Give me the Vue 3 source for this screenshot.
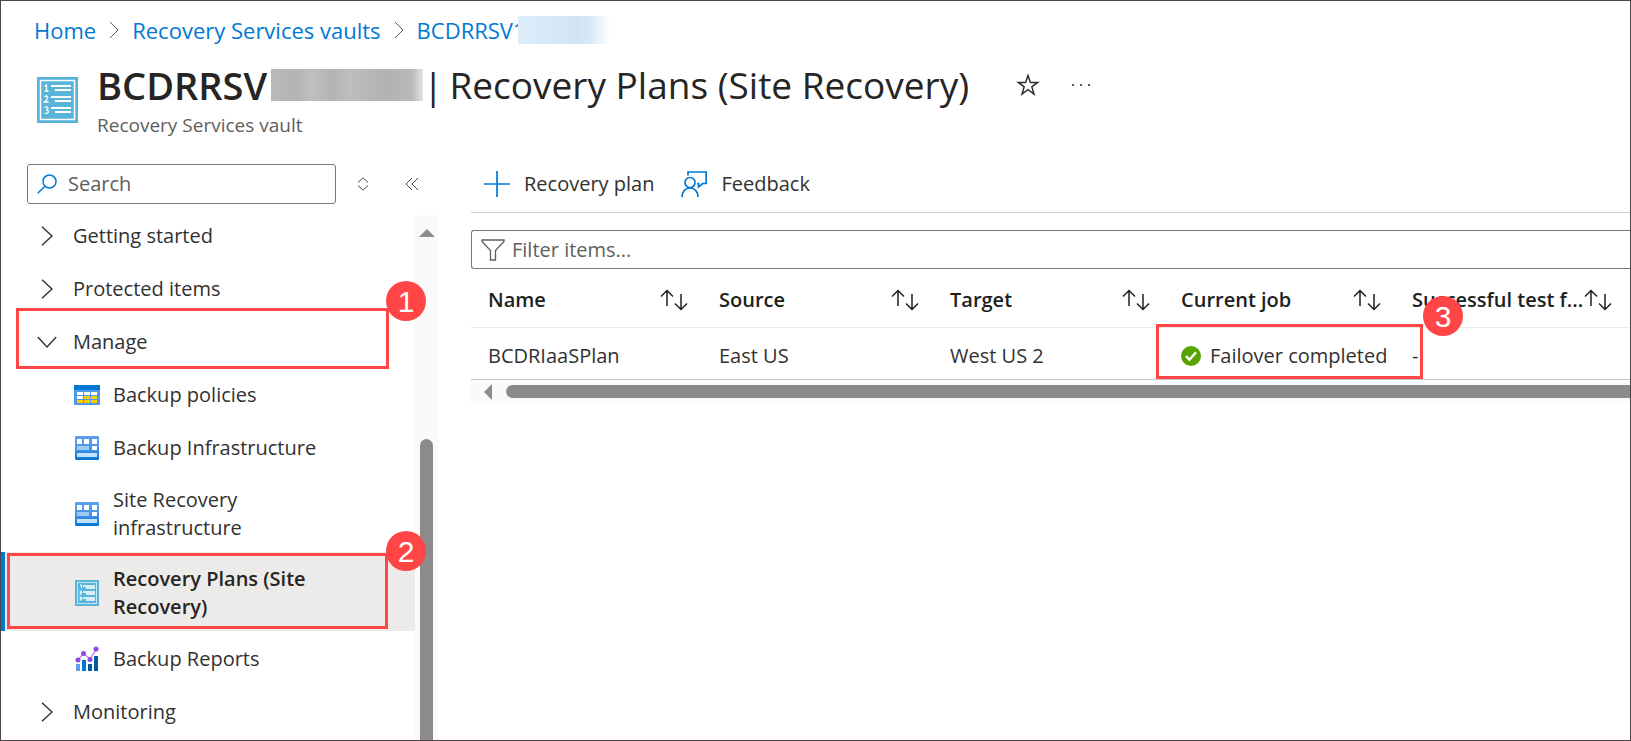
<script setup>
const groupsBefore = ['Getting started', 'Protected items']
const items = [
  { label: 'Backup policies', icon: 'policies' },
  { label: 'Backup Infrastructure', icon: 'infra' },
  { label: 'Site Recovery infrastructure', icon: 'infra' },
  { label: 'Recovery Plans (Site Recovery)', icon: 'plans', selected: true },
  { label: 'Backup Reports', icon: 'reports' }
]
const columns = ['Name', 'Source', 'Target', 'Current job', 'Successful test f...']
</script>

<template>
  <div class="page">
    <nav class="breadcrumb" aria-label="Breadcrumb">
      <a href="#">Home</a>
      <svg class="sep" viewBox="0 0 12 18"><path d="M2 1l8 8-8 8" /></svg>
      <a href="#">Recovery Services vaults</a>
      <svg class="sep" viewBox="0 0 12 18"><path d="M2 1l8 8-8 8" /></svg>
      <a href="#" class="masked">BCDRRSV1<span class="mask-blue"></span></a>
    </nav>

    <header class="header">
      <svg class="vault-icon" viewBox="0 0 41 46">
        <rect width="41" height="46" fill="#59b4d9" />
        <rect x="3.5" y="3.500" width="34" height="39" fill="none" stroke="#fff" stroke-width="1.500" />
        <path d="M14 9h20M18 13h16M14 20h20M18 24h16M14 31h20M18 35h16" stroke="#fff" stroke-width="1.800" />
        <path d="M7.500 9.500l2-1.500v6M7.500 14h4M7.500 20q2-2 3.200 0q.5 1.500-3.200 5h4M7.500 30.500q3.500-1.500 3.500 1q0 1.300-2 1.500q2.300.2 2.300 1.800q-.3 2.400-3.800 1.200" fill="none" stroke="#fff" stroke-width="1.300" />
      </svg>
      <div>
        <div class="title-row">
          <h1><b>BCDRRSV</b><span class="mask-gray"></span><span class="bar">|</span><span>Recovery Plans (Site Recovery)</span></h1>
          <button class="plain star" aria-label="Add to favorites">
            <svg viewBox="0 0 24 24"><path d="M12 2.500l2.400 6.900h7.300l-5.900 4.400 2.200 7.200-6-4.400-6 4.400 2.200-7.200-5.900-4.400h7.300z" /></svg>
          </button>
          <button class="plain dots" aria-label="More">
            <svg viewBox="0 0 20 4"><circle cx="2" cy="2" r="1.100" /><circle cx="10" cy="2" r="1.100" /><circle cx="18" cy="2" r="1.100" /></svg>
          </button>
        </div>
        <p class="subtitle">Recovery Services vault</p>
      </div>
    </header>

    <div class="body">
      <aside class="sidebar">
        <div class="side-tools">
          <label class="box search">
            <svg viewBox="0 0 20 20"><circle cx="12.500" cy="7.500" r="6.500" /><path d="M8 12.200L.7 19.300" /></svg>
            <input type="text" placeholder="Search" aria-label="Search" />
          </label>
          <button class="plain" aria-label="Expand or collapse groups">
            <svg class="updown" viewBox="0 0 12 14"><path d="M1 5.500L6 .8l5 4.700M1 8.500l5 4.700 5-4.700" /></svg>
          </button>
          <button class="plain" aria-label="Hide menu">
            <svg class="hide" viewBox="0 0 14 14"><path d="M7 1L1 7l6 6M13 1L7 7l6 6" /></svg>
          </button>
        </div>

        <div class="side-body">
          <nav class="menu" aria-label="Vault menu">
            <button v-for="g in groupsBefore" :key="g" class="row group">
              <span class="chev"><svg class="right" viewBox="0 0 12 20"><path d="M1 .8l10 9.200-10 9.200" /></svg></span>{{ g }}
            </button>
            <div class="marked">
              <button class="row group" aria-expanded="true">
                <span class="chev"><svg class="down" viewBox="0 0 20 12"><path d="M.8 1l9.200 10 9.200-10" /></svg></span>Manage
              </button>
              <span class="frame frame-1"></span>
              <span class="badge badge-1">1</span>
            </div>
            <div v-for="i in items" :key="i.label" class="marked">
              <a href="#" class="row item" :class="{ selected: i.selected }">
                <svg v-if="i.icon === 'policies'" class="icon" viewBox="0 0 26 26">
                  <rect y="3" width="26" height="20" rx="1" fill="#4f9ae8" />
                  <rect y="3" width="26" height="5" fill="#0078d4" />
                  <path d="M3 10h6v3H3zM10 10h6v3h-6zM17 10h6v3h-6zM3 14h6v3H3z" fill="#fff" />
                  <path d="M10 14h6v3h-6zM17 14h6v3h-6zM3 18h6v3H3zM10 18h6v3h-6zM17 18h6v3h-6z" fill="#ffca00" />
                </svg>
                <svg v-else-if="i.icon === 'infra'" class="icon" viewBox="0 0 26 26">
                  <defs><linearGradient :id="'g' + i.label.length" x2="0" y2="1"><stop offset="0" stop-color="#5ea0ef" /><stop offset=".5" stop-color="#4a96e8" /><stop offset="1" stop-color="#0078d4" /></linearGradient></defs>
                  <rect x="1" y="1" width="24" height="24" rx="1" :fill="'url(#g' + i.label.length + ')'" />
                  <path d="M3 4h5v5H3zM10 4h5v5h-5zM18 4h5v5h-5zM18 11h5v4h-5z" fill="#fff" />
                  <path d="M3 11h12v4H3z" fill="#9ccbfa" />
                  <path d="M3 18h20v4H3z" fill="#c3e1fa" />
                </svg>
                <svg v-else-if="i.icon === 'plans'" class="icon" viewBox="0 0 26 26">
                  <rect x="1" width="24" height="26" fill="#59b4d9" />
                  <rect x="3.500" y="2.500" width="19" height="21" fill="none" stroke="#c4e7f4" />
                  <path d="M9 6h12M12 8h9M9 12h12M12 14h9M9 18h12M12 20h9" stroke="#fff" stroke-width="1.300" />
                  <path d="M6 5h1.500v3M5.500 11h2v1.500H6V14h2M5.500 17h2v3h-2M6 18.500h1.500" fill="none" stroke="#fff" />
                </svg>
                <svg v-else class="icon" viewBox="0 0 26 26">
                  <path d="M2 18h4v7H2z" fill="#5ea0ef" /><path d="M8 14h4v11H8z" fill="#0078d4" />
                  <path d="M14 18h4v7h-4zM20 10h4v15h-4z" fill="#005ba1" />
                  <path d="M4 14L9.500 7.500l6.500 5.500L22.500 3" fill="none" stroke="#c69aeb" stroke-width="1.600" />
                  <g fill="#8a4be0"><circle cx="4" cy="14" r="2.500" /><circle cx="9.500" cy="7.500" r="2.500" /><circle cx="16" cy="13.500" r="2.500" /><circle cx="22" cy="3" r="2.500" /></g>
                </svg>
                <span class="label">{{ i.label }}</span>
              </a>
              <template v-if="i.selected">
                <span class="frame frame-2"></span>
                <span class="badge badge-2">2</span>
              </template>
            </div>
            <button class="row group">
              <span class="chev"><svg class="right" viewBox="0 0 12 20"><path d="M1 .8l10 9.200-10 9.200" /></svg></span>Monitoring
            </button>
          </nav>
          <div class="vscroll">
            <svg viewBox="0 0 16 8"><path d="M0 8l8-8 8 8z" fill="#8b8b8b" /></svg>
            <span class="vthumb"></span>
          </div>
        </div>
      </aside>

      <main class="main">
        <div class="commands">
          <button class="command">
            <svg class="plus" viewBox="0 0 26 26"><path d="M13 0v26M0 13h26" /></svg>Recovery plan
          </button>
          <button class="command">
            <svg class="feedback" viewBox="0 0 26 26">
              <path d="M7 4.500V1h18.200v11.500h-3.500L17.500 16v-3.500H16" />
              <circle cx="9" cy="11.500" r="5" /><path d="M1 26c0-5.500 3.500-9 8-9s8 3.500 8 9" />
            </svg>Feedback
          </button>
        </div>
        <label class="box filter">
          <svg viewBox="0 0 24 22"><path d="M1 1h22v1.500l-8.500 9V21h-5v-9.500L1 2.500z" /></svg>
          <input type="text" placeholder="Filter items..." aria-label="Filter items" />
        </label>
        <table class="grid">
          <colgroup><col v-for="n in 4" :key="n" class="col" /><col /></colgroup>
          <thead>
            <tr>
              <th v-for="c in columns" :key="c" scope="col">
                <button class="sort">
                  {{ c }}
                  <svg viewBox="0 0 28 22"><path d="M7 17V2M1 7.500L7 1.500l6 6M21 5v15M15 14.500l6 6 6-6" /></svg>
                </button>
              </th>
            </tr>
          </thead>
          <tbody>
            <tr>
              <td>BCDRIaaSPlan</td>
              <td>East US</td>
              <td>West US 2</td>
              <td class="job">
                <span class="status">
                  <svg viewBox="0 0 20 20"><circle cx="10" cy="10" r="10" fill="#57a300" /><path d="M5 10l3.500 3.800L15 6.300" fill="none" stroke="#fff" stroke-width="2.400" /></svg>
                  Failover completed
                </span>
                <span class="frame frame-3"></span>
                <span class="badge badge-3">3</span>
              </td>
              <td>-</td>
            </tr>
          </tbody>
        </table>
        <div class="hscroll">
          <svg viewBox="0 0 8 16"><path d="M8 0v16L0 8z" fill="#8b8b8b" /></svg>
          <span class="hthumb"></span>
        </div>
      </main>
    </div>
  </div>
</template>

<style>
body { background: #fff; }
</style>

<style scoped>
* { box-sizing: border-box; }
.page {
  display: flex;
  flex-direction: column;
  height: 100vh;
  overflow: hidden;
  border: 1px solid #4c4649;
  background: #fff;
  color: #323130;
  font: 20px/28px "Open Sans", "Noto Sans", sans-serif;
}
button, input { font: inherit; color: inherit; }
button { margin: 0; padding: 0; border: 0; background: none; text-align: left; cursor: pointer; }
svg { display: block; flex: none; fill: none; }
a { text-decoration: none; color: inherit; }

.breadcrumb { display: flex; align-items: center; gap: 12px; padding: 15px 0 0 33px; font-size: 22px; }
.breadcrumb a { color: #0078d4; }
.sep { width: 12px; height: 18px; stroke: #605e5c; stroke-width: 1; }
.masked { display: flex; align-items: center; }
.mask-blue {
  position: relative;
  width: 92px;
  height: 28px;
  margin-left: -8px;
  background: linear-gradient(90deg, #deedf9, #cfe5f6 65%, #d6e9f8 78%, #fff);
}

.header { display: flex; gap: 19px; padding: 18px 0 0 36px; }
.vault-icon { width: 41px; height: 46px; margin-top: 15px; }
.title-row { display: flex; align-items: center; }
h1 { display: flex; align-items: center; margin: 0; font-size: 37px; line-height: 46px; font-weight: 400; color: #262524; white-space: nowrap; }
h1 b { font-size: 38px; font-weight: 600; }
.mask-gray {
  width: 152px;
  height: 32px;
  margin-left: 4px;
  background: linear-gradient(90deg, #b9b9b9, #b4b4b4 18%, #c0c0c0 26%, #b4b4b4 40%, #bebebe 52%, #b2b2b2 75%, #bababa 93%, #e4e4e4);
}
.bar { margin-right: 6px; }
.star { margin-left: 47px; }
.star svg { width: 24px; height: 24px; stroke: #323130; stroke-width: 1.5; }
.dots { margin-left: 31px; }
.dots svg { width: 20px; height: 4px; fill: #323130; }
.subtitle { margin: 4px 0 0; font-size: 19px; line-height: 26px; color: #605e5c; }

.body { display: flex; flex: 1; min-height: 0; padding-top: 26px; }
.sidebar { display: flex; flex-direction: column; width: 437px; flex: none; }
.side-tools { display: flex; align-items: center; height: 40px; padding-left: 26px; margin-bottom: 4px; }
.box { display: flex; align-items: center; border: 1px solid #7a7876; border-radius: 3px; }
.box input { flex: 1; min-width: 0; padding: 0; border: 0; outline: 0; background: none; }
.box input::placeholder { color: #605e5c; opacity: 1; }
.search { width: 309px; height: 40px; padding-left: 9px; gap: 11px; }
.search svg { width: 20px; height: 20px; stroke: #0078d4; stroke-width: 1.5; }
.updown { width: 12px; height: 14px; margin-left: 21px; stroke: #484644; }
.hide { width: 14px; height: 14px; margin-left: 36px; stroke: #484644; }

.side-body { display: flex; flex: 1; min-height: 0; }
.menu { width: 414px; }
.marked { position: relative; }
.row { display: flex; align-items: center; width: 100%; min-height: 53px; padding: 13px 0 10px; }
.group { padding-left: 36px; }
.chev { display: flex; justify-content: center; width: 20px; margin-right: 16px; }
.chev svg { stroke: #323130; stroke-width: 1.4; }
.right { width: 12px; height: 20px; }
.down { width: 20px; height: 12px; }
.item { padding-left: 73px; }
.icon { width: 26px; height: 26px; margin-right: 13px; }
.label { width: 226px; }
.selected { padding-left: 69px; border-left: 4px solid #0078d4; background: #edebe9; font-weight: 600; color: #262524; }

.vscroll { display: flex; flex-direction: column; align-items: center; width: 23px; margin-top: 7px; padding-top: 14px; background: #fafafa; }
.vscroll svg { width: 16px; height: 8px; }
.vthumb { flex: 1; width: 13px; margin-top: 202px; border-radius: 7px 7px 0 0; background: #8b8b8b; }

.frame { position: absolute; border: 3px solid #ff4545; pointer-events: none; }
.badge {
  position: absolute;
  z-index: 2;
  width: 40px;
  height: 40px;
  border-radius: 50%;
  background: #ff4545;
  color: #fff;
  font: 30px/42px "Liberation Sans", Arial, sans-serif;
  text-align: center;
}
.frame-1 { left: 15px; top: -6px; right: 26px; bottom: -2px; }
.frame-2 { left: 6px; top: 1px; right: 27px; bottom: 2px; }
.badge-1 { right: -11px; top: -33px; }
.badge-2 { right: -11px; top: -21px; }
.frame-3 { left: -8px; top: -4px; right: -28px; bottom: 0; }
.badge-3 { right: -68px; top: -32px; }

.main { flex: 1; min-width: 0; padding-left: 33px; }
.commands { display: flex; align-items: center; gap: 27px; height: 49px; padding: 0 0 9px 13px; border-bottom: 1px solid #d2d0ce; }
.command { display: flex; align-items: center; gap: 14px; }
.command svg { width: 26px; height: 26px; stroke: #0078d4; stroke-width: 1.7; }
.filter { height: 39px; margin-top: 17px; padding-left: 9px; gap: 7px; border-right: 0; border-radius: 3px 0 0 3px; }
.filter svg { width: 24px; height: 22px; stroke: #605e5c; stroke-width: 1.3; }

.grid { width: 100%; border-collapse: separate; border-spacing: 0; table-layout: fixed; white-space: nowrap; }
.col { width: 231px; }
th, td { text-align: left; padding: 0 14px 0 17px; }
th { height: 59px; padding-top: 3px; border-bottom: 1px solid #edebe9; color: #201f1e; }
td { height: 52px; padding-top: 4px; border-bottom: 1px solid #c8c6c4; }
th:last-child { padding-right: 18px; }
.sort { display: flex; align-items: center; justify-content: space-between; width: 100%; font-weight: 600; }
.sort svg { width: 28px; height: 22px; stroke: #201f1e; stroke-width: 1.5; }
.job { position: relative; }
.status { display: flex; align-items: center; gap: 9px; }
.status svg { width: 20px; height: 20px; }

.hscroll { display: flex; align-items: center; height: 23px; padding-left: 13px; background: #fafafa; }
.hscroll svg { width: 8px; height: 16px; }
.hthumb { flex: 1; height: 13px; margin-left: 14px; border-radius: 7px 0 0 7px; background: #8b8b8b; }
</style>
